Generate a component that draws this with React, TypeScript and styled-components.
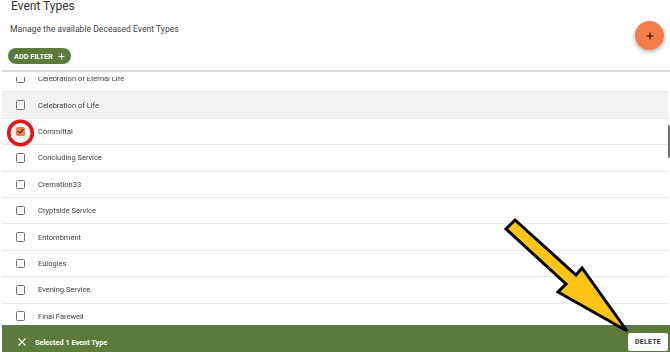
import styled, { createGlobalStyle } from "styled-components";

const GlobalStyle = createGlobalStyle`
  html, body {
    margin: 0;
    padding: 0;
    overflow: hidden;
    background: #ffffff;
  }
  body {
    font-family: Roboto, "Liberation Sans", Arial, sans-serif;
    color: #333333;
  }
`;

const eventTypes = [
  "Celebration of Eternal Life",
  "Celebration of Life",
  "Committal",
  "Concluding Service",
  "Cremation33",
  "Cryptside Service",
  "Entombment",
  "Eulogies",
  "Evening Service",
  "Final Farewell",
];

const GREEN = "#5b7a3b";

export default function App() {
  return (
    <>
      <GlobalStyle />
      <Page>
        <Header>
          <TitleBlock>
            <Title>Event Types</Title>
            <Subtitle>Manage the available Deceased Event Types</Subtitle>
            <FilterButton>
              ADD FILTER
              <svg width="7" height="7" viewBox="0 0 7 7">
                <path d="M3.5 0.5v6M0.5 3.5h6" stroke="#fff" strokeWidth="1.2" />
              </svg>
            </FilterButton>
          </TitleBlock>
          <Fab>
            <svg width="8" height="8" viewBox="0 0 8 8">
              <path d="M4 0.5v7M0.5 4h7" stroke="#111" strokeWidth="1.1" />
            </svg>
          </Fab>
        </Header>

        <Table>
          <StickyHead />
          <ListViewport>
            <List>
              {eventTypes.map((name, i) => (
                <Row key={name} $hover={i === 1}>
                  <Checkbox $checked={name === "Committal"}>
                    {name === "Committal" && (
                      <svg width="8" height="8" viewBox="0 0 8 8">
                        <path d="M1.3 4.2l1.9 1.9 3.6-4" stroke="#222" strokeWidth="1.1" fill="none" />
                      </svg>
                    )}
                  </Checkbox>
                  <RowLabel>{name}</RowLabel>
                </Row>
              ))}
            </List>
            <ScrollThumb />
          </ListViewport>
          <SelectionBar>
            <svg width="8" height="8" viewBox="0 0 8 8">
              <path d="M0.5 0.5l7 7M7.5 0.5l-7 7" stroke="#fff" strokeWidth="1.2" />
            </svg>
            <SelectionText>Selected 1 Event Type</SelectionText>
            <DeleteButton>DELETE</DeleteButton>
          </SelectionBar>
        </Table>

        <Annotations width="670" height="352" viewBox="0 0 670 352">
          <circle cx="20.5" cy="133" r="11.8" fill="rgba(244,124,74,0.08)" stroke="#e3151d" strokeWidth="3.6" />
          <polygon
            points="515,220 576,275 582,268 627,331 558,292 566,284 506,229"
            fill="#ffc516"
            stroke="#000"
            strokeWidth="3"
            strokeLinejoin="miter"
          />
        </Annotations>
      </Page>
    </>
  );
}

const Page = styled.div`
  position: relative;
  width: 670px;
  height: 352px;
  overflow: hidden;
`;

const Header = styled.header`
  display: flex;
  justify-content: space-between;
  align-items: flex-start;
  height: 70px;
  padding: 0 6px 0 8px;
  box-sizing: border-box;
`;

const TitleBlock = styled.div`
  display: flex;
  flex-direction: column;
  align-items: flex-start;
`;

const Title = styled.h1`
  margin: -1px 0 0 3px;
  font-size: 12px;
  line-height: 14px;
  font-weight: 400;
  color: #333333;
`;

const Subtitle = styled.p`
  margin: 11px 0 0 2px;
  font-size: 8.6px;
  line-height: 10px;
  color: #444444;
`;

const FilterButton = styled.button`
  display: inline-flex;
  align-items: center;
  gap: 5px;
  margin-top: 14px;
  height: 16px;
  padding: 0 6px;
  border: none;
  border-radius: 8px;
  background: ${GREEN};
  color: #ffffff;
  font-family: Roboto, "Liberation Sans", Arial, sans-serif;
  font-size: 7.3px;
  font-weight: 700;
  white-space: nowrap;
`;

const Fab = styled.button`
  display: flex;
  align-items: center;
  justify-content: center;
  width: 29px;
  height: 29px;
  margin-top: 21px;
  padding: 0;
  border: none;
  border-radius: 50%;
  background: #f57c4b;
  box-shadow: 0 2px 4px rgba(0, 0, 0, 0.3);
`;

const Table = styled.section`
  margin-left: 2px;
  border-top: 2px solid #dcdcdc;
`;

const StickyHead = styled.div`
  height: 5px;
  background: #ffffff;
`;

const ListViewport = styled.div`
  position: relative;
  height: 248px;
  overflow: hidden;
`;

const List = styled.div`
  margin-top: -11.4px;
  will-change: transform;
`;

const Row = styled.div<{ $hover?: boolean }>`
  display: flex;
  align-items: center;
  width: 666px;
  height: 26.4px;
  box-sizing: border-box;
  padding-left: 13.5px;
  border-bottom: 1px solid #e8e8e8;
  background: ${(p) => (p.$hover ? "#f2f2f2" : "#ffffff")};
`;

const Checkbox = styled.span<{ $checked?: boolean }>`
  display: flex;
  align-items: center;
  justify-content: center;
  width: 9.5px;
  height: 9.5px;
  box-sizing: border-box;
  border: 1.2px solid ${(p) => (p.$checked ? "#f47c4a" : "#707070")};
  border-radius: 1.5px;
  background: ${(p) => (p.$checked ? "#f47c4a" : "transparent")};
`;

const RowLabel = styled.span`
  margin-left: 13px;
  font-size: 7.5px;
  color: #404040;
`;

const ScrollThumb = styled.div`
  position: absolute;
  right: 0;
  top: 48px;
  width: 2.5px;
  height: 33px;
  border-radius: 1px;
  background: #6f6f6f;
`;

const SelectionBar = styled.div`
  display: flex;
  align-items: center;
  height: 27px;
  box-sizing: border-box;
  padding: 7px 2px 0 16px;
  background: ${GREEN};
  color: #ffffff;
`;

const SelectionText = styled.span`
  margin-left: 9px;
  font-size: 7.3px;
  font-weight: 700;
`;

const DeleteButton = styled.button`
  margin-left: auto;
  width: 40px;
  height: 18px;
  padding: 0;
  border: none;
  border-radius: 2px;
  background: #ffffff;
  color: #333333;
  font-family: Roboto, "Liberation Sans", Arial, sans-serif;
  font-size: 7px;
  font-weight: 700;
  letter-spacing: 0.2px;
`;

const Annotations = styled.svg`
  position: absolute;
  left: 0;
  top: 0;
  pointer-events: none;
`;
